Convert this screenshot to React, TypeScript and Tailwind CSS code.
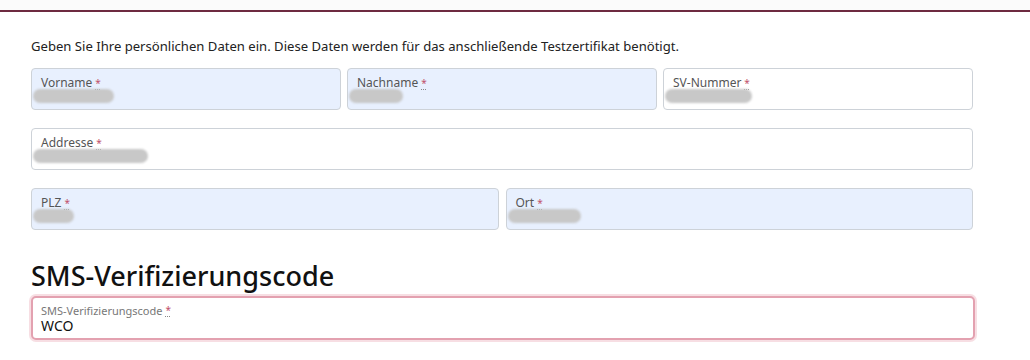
import React from "react";

const font = { fontFamily: '"Noto Sans", "Open Sans", sans-serif' };

function Star() {
  return (
    <span className="ml-[3px] text-[#c0506a] underline decoration-dotted decoration-[#888] underline-offset-2 text-[10px] align-top">*</span>
  );
}

function Field({
  label,
  filled,
  blurW,
}: {
  label: string;
  filled: boolean;
  blurW: number;
}) {
  return (
    <div
      className={`relative h-[42px] rounded-[4px] border border-[#cdd2d8] ${
        filled ? "bg-[#e8f0fe]" : "bg-white"
      } px-[9px] pt-[6px]`}
    >
      <div className="text-[12px] leading-[16px] text-[#555]">
        {label}
        <Star />
      </div>
      <div
        className="absolute left-[1px] top-[20px] h-[14px] rounded-full bg-[#c8c8c8] blur-[0.8px]"
        style={{ width: blurW }}
      />
    </div>
  );
}

export default function App() {
  return (
    <div className="w-[1030px] h-[360px] bg-white overflow-hidden" style={font}>
      <div className="h-[10px] bg-[#fbfbfb]" />
      <div className="h-[2px] bg-[#6d2a40]" />
      <div className="pl-[31px] w-[973px]">
        <p className="mt-[25px] text-[13.1px] leading-[18px] text-[#222]">
          Geben Sie Ihre persönlichen Daten ein. Diese Daten werden für das anschließende Testzertifikat benötigt.
        </p>
        <div className="mt-[13px] grid grid-cols-3 gap-[6px]">
          <Field label="Vorname" filled blurW={81} />
          <Field label="Nachname" filled blurW={54} />
          <Field label="SV-Nummer" filled={false} blurW={87} />
        </div>
        <div className="mt-[18px]">
          <Field label="Addresse" filled={false} blurW={115} />
        </div>
        <div className="mt-[18px] grid grid-cols-2 gap-[7px]">
          <Field label="PLZ" filled blurW={41} />
          <Field label="Ort" filled blurW={73} />
        </div>
        <h2 className="mt-[30px] text-[27px] leading-[32px] font-medium text-[#111]">SMS-Verifizierungscode</h2>
        <div className="mt-[4px] h-[44px] w-[944px] rounded-[5px] border-2 border-[#e3a1b0] shadow-[0_0_0_2px_rgba(240,190,200,0.5)] bg-white px-[8px] pt-[6px]">
          <div className="text-[11px] leading-[13px] text-[#777]">
            SMS-Verifizierungscode
            <Star />
          </div>
          <div className="text-[14px] leading-[17px] font-normal text-[#111]">WCO</div>
        </div>
      </div>
    </div>
  );
}
